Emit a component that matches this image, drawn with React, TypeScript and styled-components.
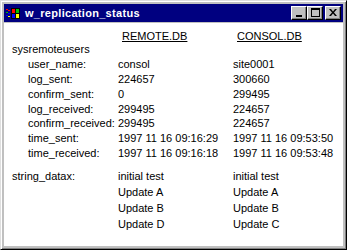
import React from 'react'
import styled, { createGlobalStyle } from 'styled-components'

const GlobalStyle = createGlobalStyle`
  html, body {
    margin: 0;
    padding: 0;
    background: #ffffff;
  }
  body {
    font-family: "Liberation Sans", Arial, sans-serif;
  }
`

const stats = [
  { label: 'user_name:', remote: 'consol', consol: 'site0001' },
  { label: 'log_sent:', remote: '224657', consol: '300660' },
  { label: 'confirm_sent:', remote: '0', consol: '299495' },
  { label: 'log_received:', remote: '299495', consol: '224657' },
  { label: 'confirm_received:', remote: '299495', consol: '224657' },
  { label: 'time_sent:', remote: '1997 11 16 09:16:29', consol: '1997 11 16 09:53:50' },
  { label: 'time_received:', remote: '1997 11 16 09:16:18', consol: '1997 11 16 09:53:48' },
]

const remoteStrings = ['initial test', 'Update A', 'Update B', 'Update D']
const consolStrings = ['initial test', 'Update A', 'Update B', 'Update C']

const WindowsLogo = () => (
  <svg width="16" height="15" viewBox="0 0 16 15">
    <rect x="0" y="0" width="16" height="15" fill="#000080" />
    <rect x="1" y="3" width="2" height="1" fill="#ff0000" />
    <rect x="3" y="4" width="2" height="1" fill="#ff0000" />
    <rect x="1" y="6" width="2" height="1" fill="#00c000" />
    <rect x="3" y="7" width="2" height="1" fill="#0000ff" />
    <rect x="1" y="9" width="2" height="1" fill="#0000ff" />
    <rect x="3" y="10" width="2" height="1" fill="#ffff00" />
    <rect x="6" y="2" width="9" height="11" fill="#000000" />
    <rect x="7" y="3" width="3" height="4" fill="#ff0000" />
    <rect x="11" y="3" width="3" height="4" fill="#00c000" />
    <rect x="7" y="8" width="3" height="4" fill="#0000ff" />
    <rect x="11" y="8" width="3" height="4" fill="#ffff00" />
  </svg>
)

const App: React.FC = () => {
  return (
    <>
      <GlobalStyle />
      <StyledWindow>
        <StyledTitleBar>
          <StyledTitleIcon>
            <WindowsLogo />
          </StyledTitleIcon>
          <StyledTitle>w_replication_status</StyledTitle>
          <StyledControls>
            <StyledCaptionButton>
              <svg width="8" height="8" viewBox="0 0 8 8">
                <rect x="1" y="6" width="6" height="2" fill="#000" />
              </svg>
            </StyledCaptionButton>
            <StyledCaptionButton>
              <svg width="9" height="9" viewBox="0 0 9 9">
                <rect x="0.5" y="0.5" width="8" height="8" fill="none" stroke="#000" />
                <rect x="0" y="0" width="9" height="2" fill="#000" />
              </svg>
            </StyledCaptionButton>
            <StyledCaptionButton $gap>
              <svg width="8" height="7" viewBox="0 0 8 7">
                <path d="M0 0h2l2 2.5L6 0h2L5 3.5 8 7H6L4 4.5 2 7H0l3-3.5z" fill="#000" />
              </svg>
            </StyledCaptionButton>
          </StyledControls>
        </StyledTitleBar>
        <StyledClient>
          <StyledStatsGrid>
            <span />
            <StyledHeader>REMOTE.DB</StyledHeader>
            <StyledHeader>CONSOL.DB</StyledHeader>

            <StyledSection>sysremoteusers</StyledSection>

            {stats.map(row => (
              <React.Fragment key={row.label}>
                <StyledLabel>{row.label}</StyledLabel>
                <StyledValue>{row.remote}</StyledValue>
                <StyledValue>{row.consol}</StyledValue>
              </React.Fragment>
            ))}
          </StyledStatsGrid>
          <StyledStringsGrid>
            <StyledOuterLabel>string_datax:</StyledOuterLabel>
            <StyledList>
              {remoteStrings.map(s => (
                <StyledListItem key={s}>{s}</StyledListItem>
              ))}
            </StyledList>
            <StyledList>
              {consolStrings.map(s => (
                <StyledListItem key={s}>{s}</StyledListItem>
              ))}
            </StyledList>
          </StyledStringsGrid>
        </StyledClient>
      </StyledWindow>
    </>
  )
}

const StyledWindow = styled.div`
  box-sizing: border-box;
  width: 347px;
  height: 250px;
  background: #c0c0c0;
  border-top: 1px solid #dfdfdf;
  border-left: 1px solid #dfdfdf;
  border-right: 1px solid #000000;
  border-bottom: 1px solid #000000;
  box-shadow: inset 1px 1px 0 #ffffff, inset -1px -1px 0 #808080;
  padding: 3px;
  display: flex;
  flex-direction: column;
`

const StyledTitleBar = styled.div`
  height: 18px;
  background: #000080;
  display: flex;
  align-items: center;
  padding: 0 2px 0 1px;
  flex-shrink: 0;
`

const StyledTitleIcon = styled.div`
  width: 16px;
  height: 15px;
  display: flex;
  margin-right: 4px;
`

const StyledTitle = styled.div`
  flex: 1;
  color: #ffffff;
  font-weight: 700;
  font-size: 11px;
  letter-spacing: 0.3px;
  white-space: nowrap;
`

const StyledControls = styled.div`
  display: flex;
  align-items: center;
`

const StyledCaptionButton = styled.div<{ $gap?: boolean }>`
  box-sizing: border-box;
  width: 16px;
  height: 14px;
  background: #c0c0c0;
  border-top: 1px solid #ffffff;
  border-left: 1px solid #ffffff;
  border-right: 1px solid #000000;
  border-bottom: 1px solid #000000;
  box-shadow: inset -1px -1px 0 #808080;
  display: flex;
  align-items: center;
  justify-content: center;
  margin-left: ${props => (props.$gap ? '2px' : '0')};
  padding-bottom: 1px;
`

const StyledClient = styled.div`
  flex: 1;
  margin-top: 1px;
  background: #ffffff;
  padding: 7px 0 0 8px;
  color: #000000;
  font-size: 11px;
`

const StyledStatsGrid = styled.div`
  display: grid;
  grid-template-columns: 106px 115px auto;
  grid-template-rows: 12px;
  grid-auto-rows: 14.8px;
  align-items: center;
`

const StyledStringsGrid = styled.div`
  display: grid;
  grid-template-columns: 106px 115px auto;
  align-items: start;
  margin-top: 8px;
`

const StyledHeader = styled.div`
  text-decoration: underline;
  padding-left: 4px;
`

const StyledSection = styled.div`
  grid-column: 1 / span 3;
`

const StyledLabel = styled.div`
  padding-left: 16px;
  white-space: nowrap;
`

const StyledOuterLabel = styled.div`
  line-height: 16px;
`

const StyledValue = styled.div`
  white-space: nowrap;
`

const StyledList = styled.div`
  display: flex;
  flex-direction: column;
`

const StyledListItem = styled.div`
  white-space: nowrap;
  line-height: 16px;
`

export default App
